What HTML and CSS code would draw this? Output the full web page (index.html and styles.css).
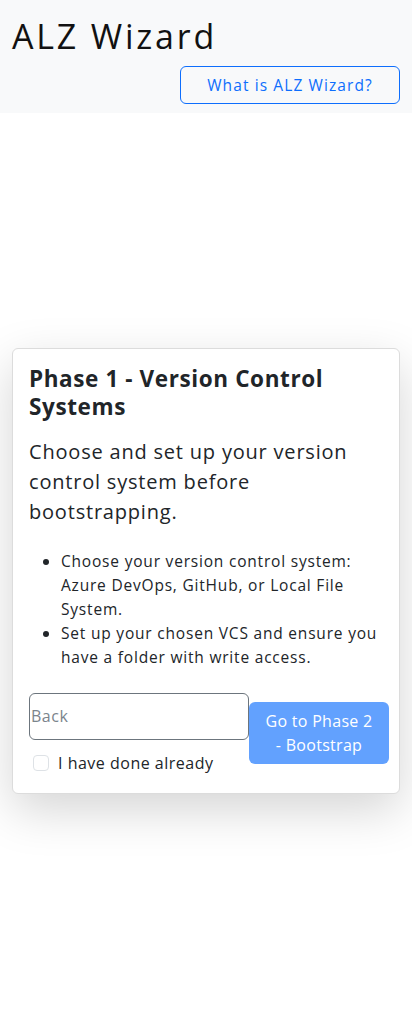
FILE: index.html
```html
<!DOCTYPE html>
<html lang="en">
<head>
<meta charset="utf-8">
<title>ALZ Wizard</title>
<link rel="stylesheet" href="styles.css">
</head>
<body>
<div class="app">
  <header class="topbar">
    <h1 class="brand">ALZ Wizard</h1>
    <div class="topbar-actions">
      <button class="btn-outline" type="button">What is ALZ Wizard?</button>
    </div>
  </header>
  <main class="stage">
    <section class="card">
      <h2 class="card-title">Phase 1 - Version Control Systems</h2>
      <p class="card-lead">Choose and set up your version control system before bootstrapping.</p>
      <ul class="steps">
        <li>Choose your version control system: Azure DevOps, GitHub, or Local File System.</li>
        <li>Set up your chosen VCS and ensure you have a folder with write access.</li>
      </ul>
      <div class="actions">
        <div class="actions-left">
          <input class="back-field" type="text" placeholder="Back">
          <label class="check">
            <span class="check-box"></span>
            <span class="check-label">I have done already</span>
          </label>
        </div>
        <button class="btn-next" type="button">Go to Phase 2 - Bootstrap</button>
      </div>
    </section>
  </main>
</div>
</body>
</html>
```

FILE: styles.css
```css
* { box-sizing: border-box; }
html, body { margin: 0; padding: 0; }
body {
  font-family: "Open Sans", "Noto Sans", sans-serif;
  color: #212529;
  background: #fff;
  letter-spacing: 0.3px;
}
.app {
  min-height: 1028px;
  display: flex;
  flex-direction: column;
}
.topbar {
  background: #f8f9fa;
  padding: 14px 12px 8px 12px;
  height: 113px;
}
.brand {
  margin: 0;
  font-size: 34px;
  font-weight: 400;
  line-height: 44px;
  letter-spacing: 2.8px;
  color: #111;
}
.topbar-actions {
  display: flex;
  justify-content: flex-end;
  margin-top: 8px;
}
.btn-outline {
  font-family: inherit;
  width: 220px;
  height: 38px;
  border: 1px solid #0d6efd;
  border-radius: 6px;
  background: transparent;
  color: #0d6efd;
  font-size: 15.5px;
  letter-spacing: 1.1px;
  padding: 0 8px;
}
.stage {
  flex: 1;
  display: flex;
  align-items: center;
  padding: 0 12px;
}
.card {
  width: 100%;
  border: 1px solid #dcdcdc;
  border-radius: 6px;
  background: #fff;
  box-shadow: 0 16px 48px rgba(0, 0, 0, 0.17);
  padding: 16px 16px 20px 16px;
}
.card-title {
  margin: 0 0 16px 0;
  font-size: 22.5px;
  font-weight: 700;
  line-height: 28px;
  letter-spacing: 0.6px;
}
.card-lead {
  margin: 0 0 22px 0;
  font-size: 20px;
  line-height: 30px;
  font-weight: 500;
  letter-spacing: 0.8px;
}
.steps {
  margin: 0 0 24px 0;
  padding-left: 32px;
  font-size: 15.5px;
  line-height: 24px;
  letter-spacing: 0.8px;
}
.actions {
  display: flex;
  align-items: center;
}
.actions-left {
  width: 219px;
  flex-shrink: 0;
}
.back-field {
  display: block;
  width: 220px;
  height: 47px;
  border: 1px solid #6c757d;
  border-radius: 6px;
  padding: 0 1px;
  font-family: inherit;
  font-size: 16px;
  letter-spacing: 0.5px;
  background: #fff;
}
.back-field::placeholder { color: #7b848c; }
.check {
  display: flex;
  align-items: center;
  gap: 9px;
  margin-top: 13px;
  padding-left: 4px;
  font-size: 16px;
  line-height: 20px;
  letter-spacing: 0.5px;
}
.check-box {
  width: 16px;
  height: 16px;
  border: 1px solid #dee2e6;
  border-radius: 4px;
  background: #fff;
}
.btn-next {
  flex-shrink: 0;
  width: 140px;
  height: 62px;
  margin-left: 1px;
  border: none;
  border-radius: 6px;
  background: #62a1fe;
  color: #fff;
  font-family: inherit;
  font-size: 16px;
  line-height: 24px;
  letter-spacing: 0.3px;
  padding: 7px 12px;
}
```
